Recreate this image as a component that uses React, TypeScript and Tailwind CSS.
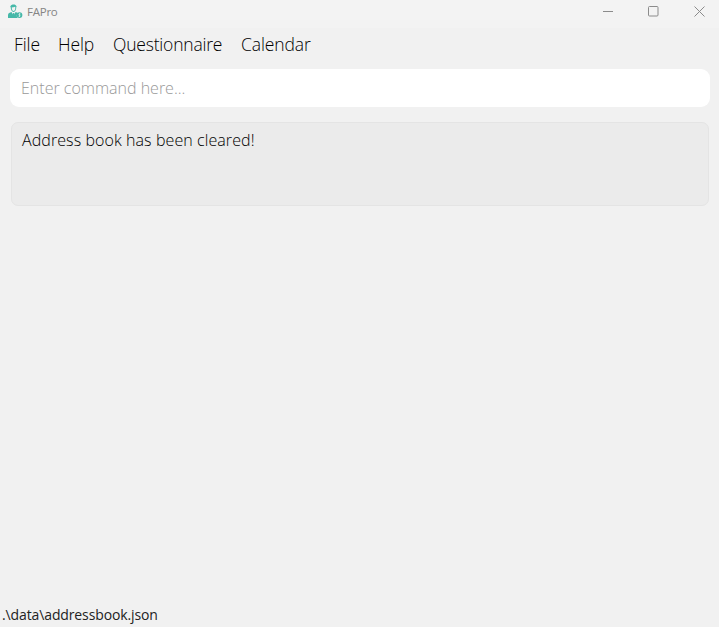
import React from "react";

function AppIcon() {
  return (
    <svg width="15" height="15" viewBox="0 0 15 15" className="-mt-px shrink-0">
      <path d="M2.500 2.200C2.900.2 7.900-.2 8.400 2.200L8.100 4.800C7.800 6.900 6.600 7.900 5.500 7.900S3.200 6.700 2.900 4.800Z" fill="#45b8a8" />
      <path d="M3.800 3.300C5.400 3.700 6.400 3 7.300 2.800c.2 2.400-.5 4.200-1.800 4.200S3.800 5.300 3.800 3.300Z" fill="#f2f2f2" />
      <path d="M0 14V11c0-1.600 1.800-2.200 3.500-2.900l2.100 3.400 2-3.400c1 .3 1.700.6 2.300 1-1.500 1.400-1.500 3.500-.2 4.900Z" fill="#45b8a8" />
      <path d="M5.100 9h1.100l.5 3-1.100 1-1.100-1Z" fill="#45b8a8" />
      <circle cx="11.500" cy="11.100" r="2.900" fill="#45b8a8" />
      <path d="M12.500 9.900c-1.800-.6-2.300.8-1 1.200s.8 1.700-1 1.100M11.500 9.200v3.800" fill="none" stroke="#e5f3f0" strokeWidth=".65" />
    </svg>
  );
}

function WindowControls() {
  return (
    <div className="mt-px ml-auto flex pr-[14px]">
      <svg className="mr-[34px]" width="11" height="11" viewBox="0 0 11 11" fill="none" stroke="#8b8b8b">
        <path d="M0 5.500H10" />
      </svg>
      <svg className="mr-[35px]" width="11" height="11" viewBox="0 0 11 11" fill="none" stroke="#8b8b8b">
        <rect x=".5" y=".5" width="9.500" height="9.500" rx="1" />
      </svg>
      <svg width="11" height="11" viewBox="0 0 11 11" fill="none" stroke="#8b8b8b">
        <path d="M.5.5l10 10M10.500.5l-10 10" />
      </svg>
    </div>
  );
}

export default function App() {
  return (
    <div className="flex h-[627px] w-[719px] flex-col overflow-hidden bg-[#f1f1f1] font-['Open_Sans','Noto_Sans',sans-serif]">
      <header className="flex h-7 shrink-0 items-start bg-[#f3f3f3] pt-[5px] pl-2">
        <AppIcon />
        <span className="-mt-px ml-1 text-[11.500px] leading-[16px] tracking-[-0.25px] text-[#858585]">FAPro</span>
        <WindowControls />
      </header>
      <nav className="flex h-[41px] shrink-0 items-start pt-[3px] pl-[14px] text-[17.500px] leading-[26px] font-light text-black">
        <span className="w-[44px] tracking-[-0.1px]">File</span>
        <span className="w-[55px] tracking-[-0.1px]">Help</span>
        <span className="w-[128px] tracking-[-0.2px]">Questionnaire</span>
        <span className="tracking-[-0.1px]">Calendar</span>
      </nav>
      <div className="mr-[9px] ml-[10px] flex h-[38px] shrink-0 items-center rounded-[9px] bg-white pl-[11px]">
        <input
          className="w-full bg-transparent text-[16px] leading-[24px] font-light text-[#999] outline-none placeholder:text-[#999]"
          placeholder="Enter command here..."
        />
      </div>
      <main className="mt-[15px] mr-[10px] ml-[11px] h-[84px] shrink-0 rounded-[7px] border border-[#e4e4e4] bg-[#ebebeb] pt-[5px] pl-[10px] text-[16px] leading-[24px] font-light tracking-[0.085px] text-black">
        Address book has been cleared!
      </main>
      <footer className="mt-auto h-[23px] pl-[2px] text-[14px] leading-[21px] tracking-[-0.12px] text-[#222]">
        .\data\addressbook.json
      </footer>
    </div>
  );
}
